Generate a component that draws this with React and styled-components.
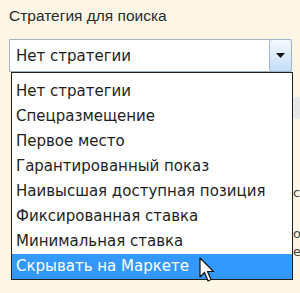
import React from "react";
import styled, { createGlobalStyle } from "styled-components";

const Global = createGlobalStyle`
  html, body { margin: 0; padding: 0; background: #fdf6e5; }
  body { width: 300px; height: 293px; overflow: hidden; }
`;

const Page = styled.div`
  position: relative;
  width: 300px;
  height: 293px;
  padding: 7px 0 0 9px;
  box-sizing: border-box;
  font-family: "DejaVu Sans", Verdana, sans-serif;
  color: #1e1e1e;
`;

const Label = styled.div`
  font-family: "Liberation Sans", Arial, sans-serif;
  font-size: 15.5px;
  line-height: 18px;
  color: #2a2a2a;
  margin-bottom: 14px;
`;

const Field = styled.div`
  position: relative;
  width: 283px;
`;

const Select = styled.div`
  display: flex;
  align-items: stretch;
  height: 33px;
  box-sizing: border-box;
  border: 1px solid #a3b3bf;
  border-right: none;
  border-radius: 2px;
  background: #fff;
`;

const Value = styled.div`
  flex: 1;
  display: flex;
  align-items: center;
  padding-left: 6px;
  font-size: 15px;
`;

const ArrowBtn = styled.div`
  width: 21px;
  margin: -1px 0;
  border: 1px solid #9cb4cc;
  border-radius: 3px;
  background: linear-gradient(#f4f9fe, #c4def8);
  display: flex;
  align-items: center;
  justify-content: center;
`;

const List = styled.ul`
  list-style: none;
  margin: 0;
  padding: 6px 0 0;
  position: absolute;
  top: 100%;
  left: 2px;
  width: 282px;
  box-sizing: border-box;
  border: 1px solid #1f1f1f;
  background: #fff;
  z-index: 2;
`;

const Item = styled.li`
  height: 25px;
  line-height: 25px;
  padding-left: 4px;
  font-size: 15px;
  white-space: nowrap;
  background: ${(p) => (p.$active ? "#3399ff" : "transparent")};
  color: ${(p) => (p.$active ? "#fff" : "#1e1e1e")};
`;

const Underlay = styled.div`
  display: flex;
  flex-direction: column;
  margin-left: 284px;
  width: 7px;
  overflow: hidden;
`;

const UnderRow = styled.div`
  height: ${(p) => p.$h}px;
  background: ${(p) => p.$bg || "transparent"};
  font-family: "DejaVu Sans", sans-serif;
  font-size: 13px;
  line-height: ${(p) => p.$h}px;
  color: #444;
  white-space: nowrap;
`;

const Cursor = styled.svg`
  position: absolute;
  left: 199px;
  top: 257px;
  z-index: 5;
`;

const items = [
  "Нет стратегии",
  "Спецразмещение",
  "Первое место",
  "Гарантированный показ",
  "Наивысшая доступная позиция",
  "Фиксированная ставка",
  "Минимальная ставка",
  "Скрывать на Маркете",
];

export default function App() {
  return (
    <>
      <Global />
      <Page>
        <Label>Стратегия для поиска</Label>
        <Field>
          <Select>
            <Value>Нет стратегии</Value>
            <ArrowBtn>
              <svg width="9" height="5" viewBox="0 0 9 5">
                <path d="M0 0H9L4.5 5Z" fill="#111" />
              </svg>
            </ArrowBtn>
          </Select>
          <List>
            {items.map((t, i) => (
              <Item key={t} $active={i === items.length - 1}>
                {t}
              </Item>
            ))}
          </List>
        </Field>
        <Underlay>
          <UnderRow $h={25} />
          <UnderRow $h={22} $bg="#e8e8e8" />
          <UnderRow $h={64} />
          <UnderRow $h={20}>с</UnderRow>
          <UnderRow $h={22} />
          <UnderRow $h={18}>о</UnderRow>
          <UnderRow $h={18}>е</UnderRow>
        </Underlay>
        <Cursor width="18" height="27" viewBox="0 0 18 27">
          <path
            d="M1 1 L1 20 L5.5 15.5 L9 24 L12 22.5 L8.5 14.5 L14.5 14.5 Z"
            fill="#fff"
            stroke="#111"
            strokeWidth="1.2"
            strokeLinejoin="round"
          />
        </Cursor>
      </Page>
    </>
  );
}
